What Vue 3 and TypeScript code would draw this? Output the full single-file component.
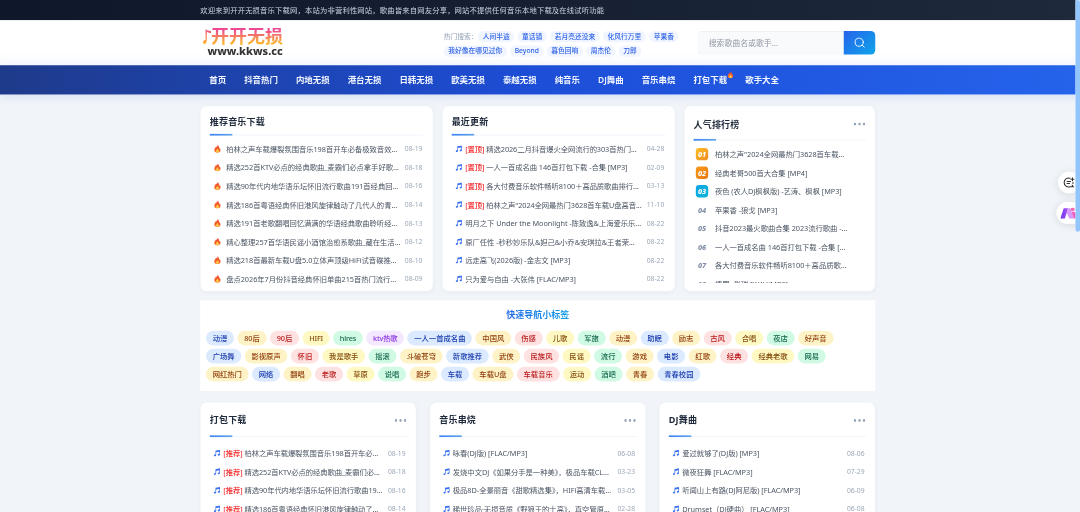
<script setup lang="ts">
interface Song { text: string; date?: string; tag?: string }

const nav: string[] = ['首页', '抖音热门', '内地无损', '港台无损', '日韩无损', '欧美无损', '泰越无损', '纯音乐', 'DJ舞曲', '音乐串烧', '打包下载', '歌手大全']
const hotTop: string[] = ['人间半途', '童话镇', '若月亮还没来', '化风行万里', '苹果香']
const hotBottom: string[] = ['我好像在哪见过你', 'Beyond', '暮色回响', '周杰伦', '刀郎']

const recommended: Song[] = [
  { text: '柏林之声车载爆裂氛围音乐198首开车必备极致音效...', date: '08-19' },
  { text: '精选252首KTV必点的经典歌曲_麦霸们必点拿手好歌...', date: '08-18' },
  { text: '精选90年代内地华语乐坛怀旧流行歌曲191首经典回...', date: '08-16' },
  { text: '精选186首粤语经典怀旧港风旋律触动了几代人的青...', date: '08-14' },
  { text: '精选191首老歌翻唱回忆满满的华语经典歌曲聆听经...', date: '08-13' },
  { text: '精心整理257首华语民谣小酒馆治愈系歌曲_藏在生活...', date: '08-12' },
  { text: '精选218首最新车载U盘5.0立体声顶级HiFi试音碟推...', date: '08-10' },
  { text: '盘点2026年7月份抖音经典怀旧单曲215首热门流行...', date: '08-09' },
]
const latest: Song[] = [
  { tag: '[置顶]', text: '精选2026二月抖音爆火全网流行的303首热门...', date: '04-28' },
  { tag: '[置顶]', text: '一人一首成名曲 146首打包下载 -合集 [MP3]', date: '02-09' },
  { tag: '[置顶]', text: '各大付费音乐软件畅听8100＋高品质歌曲排行...', date: '03-13' },
  { tag: '[置顶]', text: '柏林之声"2024全网最热门3628首车载U盘高音...', date: '11-10' },
  { text: '明月之下 Under the Moonlight -陈致逸&上海爱乐乐...', date: '08-22' },
  { text: '原厂任性 -秒秒妙乐队&妲己&小乔&安琪拉&王者荣...', date: '08-22' },
  { text: '远走高飞(2026版) -金志文 [MP3]', date: '08-22' },
  { text: '只为爱与自由 -大张伟 [FLAC/MP3]', date: '08-22' },
]
const ranking: string[] = [
  '柏林之声"2024全网最热门3628首车载...',
  '经典老哥500首大合集 [MP4]',
  '夜色 (农人DJ枫枫版) -艺涛、枫枫 [MP3]',
  '苹果香 -狼戈 [MP3]',
  '抖音2023最火歌曲合集 2023流行歌曲 -...',
  '一人一首成名曲 146首打包下载 -合集 [...',
  '各大付费音乐软件畅听8100＋高品质歌...',
  '情罪 -张瑞 [WAV/MP3]',
]
const tagRows: string[][] = [
  ['动漫', '80后', '90后', 'HIFI', 'hires', 'ktv热歌', '一人一首成名曲', '中国风', '伤感', '儿歌', '军旅', '动漫', '助眠', '励志', '古风', '合唱', '夜店', '好声音'],
  ['广场舞', '影视原声', '怀旧', '我是歌手', '摇滚', '斗破苍穹', '新歌推荐', '武侠', '民族风', '民谣', '流行', '游戏', '电影', '红歌', '经典', '经典老歌', '网易'],
  ['网红热门', '网络', '翻唱', '老歌', '草原', '说唱', '跑步', '车载', '车载U盘', '车载音乐', '运动', '酒吧', '青春', '青春校园'],
]
const palette: string[] = ['blue', 'amber', 'red', 'yellow', 'green', 'amber']
const tagColor = (row: number, i: number): string => {
  if (row === 0 && i === 5) return 'purple'
  const start = row === 0 ? 0 : row === 1 ? 18 : 35
  return palette[(start + i) % 6]
}
const hasLatin = (t: string): boolean => /[a-z]{2}/i.test(t)
const sections: { title: string; rows: Song[] }[] = [
  { title: '打包下载', rows: [
    { tag: '[推荐]', text: '柏林之声车载爆裂氛围音乐198首开车必...', date: '08-19' },
    { tag: '[推荐]', text: '精选252首KTV必点的经典歌曲_麦霸们必...', date: '08-18' },
    { tag: '[推荐]', text: '精选90年代内地华语乐坛怀旧流行歌曲19...', date: '08-16' },
    { tag: '[推荐]', text: '精选186首粤语经典怀旧港风旋律触动了...', date: '08-14' },
  ] },
  { title: '音乐串烧', rows: [
    { text: '咏春(DJ版) [FLAC/MP3]', date: '06-08' },
    { text: '发烧中文DJ《如果分手是一种美》，极品车载CL...', date: '03-23' },
    { text: '极品8D-全景丽音《甜歌精选集》，HIFi高清车载...', date: '03-05' },
    { text: '稀世珍品·无损音质《野狼王的士高》，真空管原...', date: '02-28' },
  ] },
  { title: 'DJ舞曲', rows: [
    { text: '爱过就够了(DJ版) [MP3]', date: '08-06' },
    { text: '微夜狂舞 [FLAC/MP3]', date: '07-29' },
    { text: '听闻山上有路(DJ阿尼版) [FLAC/MP3]', date: '06-09' },
    { text: 'Drumset（DJ硬曲） [FLAC/MP3]', date: '06-08' },
  ] },
]
</script>

<template>
  <div class="viewport">
    <div class="page">
      <svg class="defs" width="0" height="0">
        <defs>
          <linearGradient id="fire" x1="0" y1="0" x2="0" y2="1"><stop offset="0" stop-color="#e8452c" /><stop offset="1" stop-color="#fb7a2a" /></linearGradient>
          <linearGradient id="logoG" x1="0" y1="0" x2="0" y2="1"><stop offset="0" stop-color="#f0468c" /><stop offset="1" stop-color="#fdb52c" /></linearGradient>
          <symbol id="flame" viewBox="0 0 16 16">
            <path fill="url(#fire)" d="M8.2.5c.5 2.2-.3 3.1-1.4 4.4-.5-.8-.6-1.3-1.3-1.8C5.300 5.200 2 7 2 10.400 2 13.500 4.600 15.700 8 15.700s6-2.200 6-5.300c0-2-1-3.400-1.800-4.500-.2.800-.4 1.200-1 1.600C11.400 4.500 10.600 1.900 8.200.5z" />
            <path fill="#fdc847" d="M8.200 7.500c.2 1.500-2.900 2.600-2.900 5 0 1.600 1.200 2.700 2.800 2.700s2.800-1.100 2.800-2.700c0-1.100-.5-1.700-.9-2.300-.2.500-.4.700-.7.800.1-1.500-.2-2.700-1.100-3.500z" />
          </symbol>
          <symbol id="note" viewBox="0 0 16 16">
            <path fill="#3b72f0" d="M5 2.600 15 .8v10.400c0 1.500-1.300 2.600-2.900 2.600-1.300 0-2.200-.7-2.200-1.800 0-1.300 1.300-2.300 2.800-2.300.3 0 .6 0 .8.1V5.100L6.500 6.300v6.500c0 1.500-1.300 2.600-2.900 2.600-1.300 0-2.200-.7-2.200-1.800 0-1.300 1.300-2.300 2.800-2.300.3 0 .6 0 .8.1z" />
          </symbol>
        </defs>
      </svg>

      <div class="topbar"><div class="wrap">欢迎来到开开无损音乐下载网，本站为非营利性网站，歌曲皆来自网友分享，网站不提供任何音乐本地下载及在线试听功能</div></div>

      <header class="header">
        <div class="wrap head-row">
          <div class="logo">
            <div class="logo-top">
              <svg class="logo-note" viewBox="0 0 17 34"><path fill="url(#logoG)" d="M5 1c1 4 6 5 11 5v4c-4 0-7-1-8.500-3v17c0 5-2 8-5 8S-1 28 1 25.500c1.200-1.500 3-2 4-1.500z" /></svg>
              <span class="logo-cn">开开无损</span>
            </div>
            <div class="logo-url">www.kkws.cc</div>
          </div>
          <div class="hot">
            <div class="hot-line"><span class="hot-label">热门搜索：</span><a v-for="h in hotTop" :key="h">{{ h }}</a></div>
            <div class="hot-line"><a v-for="h in hotBottom" :key="h">{{ h }}</a></div>
          </div>
          <div class="search">
            <div class="search-input">搜索歌曲名或歌手...</div>
            <div class="search-btn">
              <svg width="20" height="20" viewBox="0 0 20 20" fill="none" stroke="#fff" stroke-width="1.6" stroke-linecap="round"><circle cx="9.500" cy="9" r="7.300" /><path d="m15 14.500 3.500 3.500" /></svg>
            </div>
          </div>
        </div>
      </header>

      <nav class="nav">
        <div class="wrap nav-row">
          <a v-for="n in nav" :key="n">{{ n }}<svg v-if="n === '打包下载'" class="nav-fire"><use href="#flame" /></svg></a>
        </div>
      </nav>

      <main class="wrap main">
        <div class="top-grid">
          <section class="card">
            <h3 class="title">推荐音乐下载</h3>
            <div class="row fire-row" v-for="s in recommended" :key="s.text">
              <svg class="ico"><use href="#flame" /></svg><span class="txt">{{ s.text }}</span><time>{{ s.date }}</time>
            </div>
          </section>
          <section class="card">
            <h3 class="title">最近更新</h3>
            <div class="row" v-for="s in latest" :key="s.text">
              <svg class="ico"><use href="#note" /></svg><span class="txt" :class="{ tagged: s.tag }"><b v-if="s.tag">{{ s.tag }}</b>{{ s.text }}</span><time>{{ s.date }}</time>
            </div>
          </section>
          <section class="card">
            <h3 class="title tall">人气排行榜<span class="more"><i /><i /><i /></span></h3>
            <div class="rank-list">
              <div class="row" v-for="(r, i) in ranking" :key="r">
                <span class="num" :class="'n' + (i + 1)">0{{ i + 1 }}</span><span class="txt">{{ r }}</span>
              </div>
            </div>
          </section>
        </div>

        <section class="tags">
          <h3>快速导航小标签</h3>
          <div class="tag-row" v-for="(row, r) in tagRows" :key="r">
            <a v-for="(t, i) in row" :key="i" :class="[tagColor(r, i), { latin: hasLatin(t) }]">{{ t }}</a>
          </div>
        </section>

        <div class="bottom-grid">
          <section class="card" v-for="c in sections" :key="c.title">
            <h3 class="title tall">{{ c.title }}<span class="more"><i /><i /><i /></span></h3>
            <div class="row" v-for="s in c.rows" :key="s.text">
              <svg class="ico"><use href="#note" /></svg><span class="txt" :class="{ tagged: s.tag }"><b v-if="s.tag">{{ s.tag }}</b>{{ s.text }}</span><time>{{ s.date }}</time>
            </div>
          </section>
        </div>
      </main>

      <div class="float chat">
        <svg width="21" height="21" viewBox="0 0 24 24" fill="none" stroke="#333" stroke-width="2.200" stroke-linecap="round"><path d="M14 3.500A9 9 0 1 0 14 20.500h6.500l-2-3M20 14v-2M8 10h7M8 14h5M19 2.500v6M16 5.500h6" /></svg>
      </div>
      <div class="float ai">
        <svg width="32" height="20" viewBox="0 0 32 20">
          <defs><linearGradient id="aiG" x1="0" x2="1"><stop offset="0" stop-color="#6d35ee" /><stop offset="1" stop-color="#a855f7" /></linearGradient></defs>
          <path fill="url(#aiG)" d="M6 1h8L8 20H0z" /><path fill="#d79af8" d="M13 1h5l6 19h-8l-5-12z" /><path fill="#f05fc0" d="M20 8h6l5 12h-7z" /><circle cx="22" cy="3.500" r="3.500" fill="#f46bb8" />
        </svg>
      </div>
      <div class="scrollbar"><div class="thumb" /></div>
    </div>
  </div>
</template>

<style>
html, body { margin: 0; overflow: hidden; }
</style>

<style scoped>
.viewport { width: 100vw; height: 100vh; overflow: hidden; }
.page {
  position: relative; width: 1920px; height: 911px; overflow: hidden;
  transform: scale(0.5625); transform-origin: 0 0;
  background: #f1f5f9; color: #4b5563;
  font-family: "Noto Sans", "Noto Sans CJK SC", sans-serif; font-size: 13px;
}
.defs { position: absolute; }
.wrap { width: 1200px; margin-left: 356px; white-space: nowrap; }
.topbar { height: 36px; line-height: 36px; background: linear-gradient(90deg, #0f172a, #1e293b); color: #cbd5e1; letter-spacing: 0.3px; }
.header { height: 80px; background: linear-gradient(#fff 70%, #f8fafd); }
.head-row { display: flex; height: 80px; align-items: center; }
.logo { width: 433px; padding: 0 0 4px 5px; box-sizing: border-box; }
.logo-top { display: flex; height: 32px; align-items: center; }
.logo-note { width: 15px; height: 30px; margin-right: -1px; }
.logo-cn { font-size: 32px; line-height: 32px; font-weight: 700; background: linear-gradient(#ee4a91 15%, #fbb32f 85%); -webkit-background-clip: text; background-clip: text; color: transparent; }
.logo-url { font-size: 19.400px; line-height: 19px; font-weight: 800; color: #333; margin-left: 8px; }
.hot { width: 451px; font-size: 12px; padding-top: 3px; }
.hot-line { display: flex; height: 20px; align-items: center; gap: 6px; }
.hot-line + .hot-line { margin-top: 6px; }
.hot-label { color: #94a3b8; width: 55px; }
.hot-line a { padding: 0 8px; line-height: 20px; border-radius: 10px; background: #f0f5ff; color: #2f62e6; font-weight: 500; }
.search { display: flex; width: 316px; height: 42px; }
.search-input { flex: 1; border: 1px solid #e2e8f0; border-right: 0; border-radius: 8px 0 0 8px; background: #f8fafc; color: #9499a5; font-size: 14px; line-height: 40px; padding-left: 19px; }
.search-btn { display: flex; width: 56px; align-items: center; justify-content: center; border-radius: 0 8px 8px 0; background: linear-gradient(135deg, #2563eb, #0ea5e9); }
.nav { height: 52px; background: linear-gradient(90deg, #1e3a8a, #1d4ed8 50%, #2563eb); box-shadow: 0 4px 16px rgba(37, 99, 235, 0.15); position: relative; }
.nav-row { display: flex; }
.nav a { position: relative; padding: 0 16px; line-height: 52px; font-size: 15px; font-weight: 600; color: #f0f5ff; }
.nav-fire { position: absolute; right: 4px; top: 10px; width: 13px; height: 14px; }
.main { padding-top: 20px; }
.top-grid { display: grid; grid-template-columns: 414px 414px 340px; gap: 16px; height: 330px; }
.card { background: #fff; border: 1px solid #f4f7fa; border-radius: 12px; padding: 15px 16px 0; box-sizing: border-box; min-width: 0; box-shadow: 0 2px 8px rgba(15, 23, 42, 0.04); overflow: hidden; }
.title { position: relative; margin: 0 0 7px; height: 35px; line-height: 24px; font-size: 16px; font-weight: 700; color: #1e293b; letter-spacing: 0.3px; border-bottom: 2px solid #f1f5f9; }
.title::after { content: ""; position: absolute; left: 0; bottom: -2px; width: 40px; height: 3px; background: linear-gradient(90deg, #3b82f6, #60a5e8); }
.title.tall { height: 44px; line-height: 34px; }
.bottom-grid .title { margin-bottom: 12px; line-height: 31px; }
.more { position: absolute; right: 1px; top: 14px; display: flex; gap: 3.500px; }
.more i { width: 4.500px; height: 4.500px; border-radius: 50%; background: #94a3b8; }
.row { display: flex; align-items: center; height: 33px; padding: 0 2px 0 4px; letter-spacing: -0.06px; }
.ico { flex: none; width: 13px; height: 13px; margin-left: 2px; margin-right: 5px; }
.fire-row .ico { width: 15px; height: 15px; margin-left: 2px; margin-right: 8px; }
.txt { flex: 1; min-width: 0; overflow: hidden; white-space: nowrap; line-height: 22px; }
.tagged { letter-spacing: -0.13px; }
.txt b { color: #f52222; font-weight: 500; margin-right: 3.500px; }
time { font-size: 12px; color: #9ca8b8; letter-spacing: 0; }
.rank-list { height: 246px; overflow: hidden; }
.num { width: 22px; height: 22px; line-height: 22px; border-radius: 6px; margin-right: 12px; text-align: center; font-size: 13px; font-weight: 800; font-style: italic; color: #8490a8; }
.n1 { background: linear-gradient(135deg, #fbbf24, #f08c22); color: #fff; }
.n2 { background: linear-gradient(135deg, #f99a1c, #e97a10); color: #fff; }
.n3 { background: linear-gradient(135deg, #0ea5e9, #06b6d4); color: #fff; }
.tags { margin-top: 16px; height: 161px; background: #fff; padding: 0 10px; box-sizing: border-box; overflow: hidden; }
.tags h3 { margin: 13px 0 15px; line-height: 26px; font-size: 16px; text-align: center; background: linear-gradient(90deg, #2563eb 44%, #0ea5e9 56%); -webkit-background-clip: text; background-clip: text; color: transparent; }
.tag-row { display: flex; gap: 6px; margin-bottom: 6px; }
.tag-row a { padding: 0 12px; line-height: 26px; height: 26px; border-radius: 13px; font-weight: 500; }
.tag-row .latin { letter-spacing: -0.35px; }
.blue { background: #dbeafe; color: #1e40af; }
.amber { background: #fef3c7; color: #92400e; }
.red { background: #fee2e2; color: #b91c1c; }
.yellow { background: #fef9c3; color: #854d0e; }
.green { background: #d1fae5; color: #166a4e; }
.purple { background: #f3e8ff; color: #8b35e0; }
.bottom-grid { display: grid; grid-template-columns: repeat(3, 384px); gap: 24px; margin-top: 20px; height: 500px; }
.float { position: absolute; display: flex; align-items: center; background: #fff; box-shadow: 0 2px 16px rgba(0, 0, 0, 0.12); }
.chat { left: 1881px; top: 305px; width: 39px; height: 39px; border-radius: 20px; box-sizing: border-box; padding-left: 9px; }
.ai { left: 1878px; top: 359px; width: 60px; height: 39px; border-radius: 20px; box-sizing: border-box; padding-left: 7px; }
.scrollbar { position: absolute; right: 0; top: 0; width: 8px; height: 100%; background: #f1f5f9; }
.thumb { height: 412px; border-radius: 4px; background: #93c5fd; }
</style>
